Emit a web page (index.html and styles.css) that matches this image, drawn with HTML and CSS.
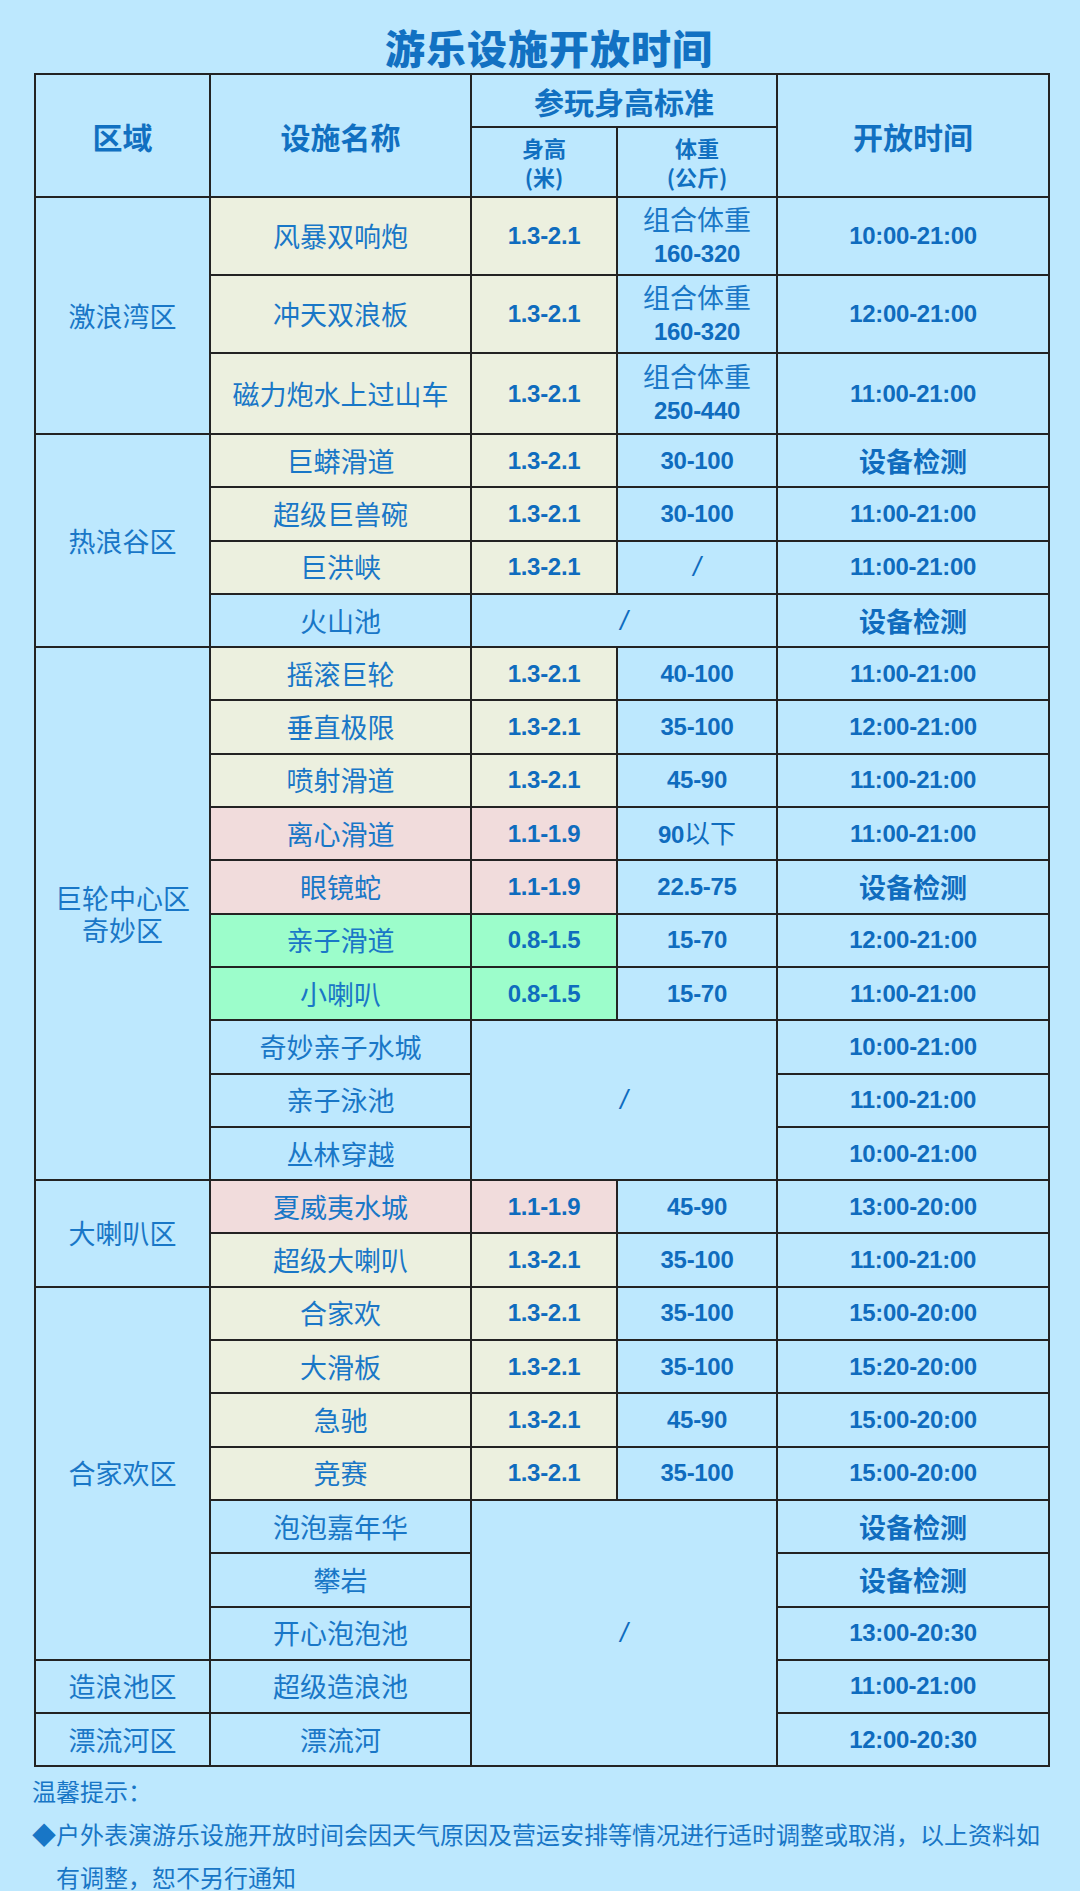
FILE: index.html
```html
<!DOCTYPE html>
<html lang="zh-CN">
<head>
<meta charset="utf-8">
<title>游乐设施开放时间</title>
<link rel="stylesheet" href="styles.css">
</head>
<body>
<div class="page">
  <h1 class="title">游乐设施开放时间</h1>
  <table class="sched">
    <colgroup>
      <col class="c-zone"><col class="c-name"><col class="c-h"><col class="c-w"><col class="c-time">
    </colgroup>
    <thead>
      <tr class="hr1">
        <th rowspan="2" class="th-big">区域</th>
        <th rowspan="2" class="th-big">设施名称</th>
        <th colspan="2" class="th-big">参玩身高标准</th>
        <th rowspan="2" class="th-big">开放时间</th>
      </tr>
      <tr class="hr2">
        <th class="th-sm">身高<br>(米)</th>
        <th class="th-sm">体重<br>(公斤)</th>
      </tr>
    </thead>
    <tbody>
      <tr class="r78">
        <td rowspan="3" class="zone">激浪湾区</td>
        <td class="name beige">风暴双响炮</td>
        <td class="num beige">1.3-2.1</td>
        <td class="combo">组合体重<br><span class="num">160-320</span></td>
        <td class="num">10:00-21:00</td>
      </tr>
      <tr class="r78">
        <td class="name beige">冲天双浪板</td>
        <td class="num beige">1.3-2.1</td>
        <td class="combo">组合体重<br><span class="num">160-320</span></td>
        <td class="num">12:00-21:00</td>
      </tr>
      <tr class="r81">
        <td class="name beige">磁力炮水上过山车</td>
        <td class="num beige">1.3-2.1</td>
        <td class="combo">组合体重<br><span class="num">250-440</span></td>
        <td class="num">11:00-21:00</td>
      </tr>

      <tr class="r">
        <td rowspan="4" class="zone">热浪谷区</td>
        <td class="name beige">巨蟒滑道</td>
        <td class="num beige">1.3-2.1</td>
        <td class="num">30-100</td>
        <td class="bold">设备检测</td>
      </tr>
      <tr class="r">
        <td class="name beige">超级巨兽碗</td>
        <td class="num beige">1.3-2.1</td>
        <td class="num">30-100</td>
        <td class="num">11:00-21:00</td>
      </tr>
      <tr class="r">
        <td class="name beige">巨洪峡</td>
        <td class="num beige">1.3-2.1</td>
        <td class="slash">/</td>
        <td class="num">11:00-21:00</td>
      </tr>
      <tr class="r">
        <td class="name">火山池</td>
        <td colspan="2" class="slash">/</td>
        <td class="bold">设备检测</td>
      </tr>

      <tr class="r">
        <td rowspan="10" class="zone zone2"><div>巨轮中心区</div><div>奇妙区</div></td>
        <td class="name beige">摇滚巨轮</td>
        <td class="num beige">1.3-2.1</td>
        <td class="num">40-100</td>
        <td class="num">11:00-21:00</td>
      </tr>
      <tr class="r">
        <td class="name beige">垂直极限</td>
        <td class="num beige">1.3-2.1</td>
        <td class="num">35-100</td>
        <td class="num">12:00-21:00</td>
      </tr>
      <tr class="r">
        <td class="name beige">喷射滑道</td>
        <td class="num beige">1.3-2.1</td>
        <td class="num">45-90</td>
        <td class="num">11:00-21:00</td>
      </tr>
      <tr class="r">
        <td class="name pink">离心滑道</td>
        <td class="num pink">1.1-1.9</td>
        <td class="num">90<span class="cjk">以下</span></td>
        <td class="num">11:00-21:00</td>
      </tr>
      <tr class="r">
        <td class="name pink">眼镜蛇</td>
        <td class="num pink">1.1-1.9</td>
        <td class="num">22.5-75</td>
        <td class="bold">设备检测</td>
      </tr>
      <tr class="r">
        <td class="name green">亲子滑道</td>
        <td class="num green">0.8-1.5</td>
        <td class="num">15-70</td>
        <td class="num">12:00-21:00</td>
      </tr>
      <tr class="r">
        <td class="name green">小喇叭</td>
        <td class="num green">0.8-1.5</td>
        <td class="num">15-70</td>
        <td class="num">11:00-21:00</td>
      </tr>
      <tr class="r">
        <td class="name">奇妙亲子水城</td>
        <td rowspan="3" colspan="2" class="slash">/</td>
        <td class="num">10:00-21:00</td>
      </tr>
      <tr class="r">
        <td class="name">亲子泳池</td>
        <td class="num">11:00-21:00</td>
      </tr>
      <tr class="r">
        <td class="name">丛林穿越</td>
        <td class="num">10:00-21:00</td>
      </tr>

      <tr class="r">
        <td rowspan="2" class="zone">大喇叭区</td>
        <td class="name pink">夏威夷水城</td>
        <td class="num pink">1.1-1.9</td>
        <td class="num">45-90</td>
        <td class="num">13:00-20:00</td>
      </tr>
      <tr class="r">
        <td class="name beige">超级大喇叭</td>
        <td class="num beige">1.3-2.1</td>
        <td class="num">35-100</td>
        <td class="num">11:00-21:00</td>
      </tr>

      <tr class="r">
        <td rowspan="7" class="zone">合家欢区</td>
        <td class="name beige">合家欢</td>
        <td class="num beige">1.3-2.1</td>
        <td class="num">35-100</td>
        <td class="num">15:00-20:00</td>
      </tr>
      <tr class="r">
        <td class="name beige">大滑板</td>
        <td class="num beige">1.3-2.1</td>
        <td class="num">35-100</td>
        <td class="num">15:20-20:00</td>
      </tr>
      <tr class="r">
        <td class="name beige">急驰</td>
        <td class="num beige">1.3-2.1</td>
        <td class="num">45-90</td>
        <td class="num">15:00-20:00</td>
      </tr>
      <tr class="r">
        <td class="name beige">竞赛</td>
        <td class="num beige">1.3-2.1</td>
        <td class="num">35-100</td>
        <td class="num">15:00-20:00</td>
      </tr>
      <tr class="r">
        <td class="name">泡泡嘉年华</td>
        <td rowspan="5" colspan="2" class="slash">/</td>
        <td class="bold">设备检测</td>
      </tr>
      <tr class="r">
        <td class="name">攀岩</td>
        <td class="bold">设备检测</td>
      </tr>
      <tr class="r">
        <td class="name">开心泡泡池</td>
        <td class="num">13:00-20:30</td>
      </tr>
      <tr class="r">
        <td class="zone">造浪池区</td>
        <td class="name">超级造浪池</td>
        <td class="num">11:00-21:00</td>
      </tr>
      <tr class="r">
        <td class="zone">漂流河区</td>
        <td class="name">漂流河</td>
        <td class="num">12:00-20:30</td>
      </tr>
    </tbody>
  </table>
  <div class="notes">
    <p class="note-title">温馨提示：</p>
    <p class="note-item">◆户外表演游乐设施开放时间会因天气原因及营运安排等情况进行适时调整或取消，以上资料如有调整，恕不另行通知</p>
  </div>
</div>
</body>
</html>
```

FILE: styles.css
```css
html, body {
  margin: 0;
  padding: 0;
  background: #bde8fe;
}

.page {
  width: 1080px;
  min-height: 1891px;
  background: #bde8fe;
  font-family: "Noto Sans CJK SC", sans-serif;
  color: #1876c6;
}

.title {
  margin: 0;
  padding: 21px 0 0 18px;
  height: 52px;
  line-height: 52px;
  text-align: center;
  font-size: 40px;
  font-weight: 900;
  letter-spacing: 1px;
  color: #1271c2;
}

.sched {
  margin-left: 34px;
  width: 1014px;
  border-collapse: collapse;
  table-layout: fixed;
  border: 2px solid #232323;
}

.c-zone { width: 175px; }
.c-name { width: 261px; }
.c-h { width: 146px; }
.c-w { width: 160px; }
.c-time { width: 272px; }

.sched th,
.sched td {
  border: 2px solid #232323;
  padding: 0;
  text-align: center;
  vertical-align: middle;
  background: #bde8fe;
}

.sched th {
  color: #1170c1;
  font-weight: 700;
}

.hr1 { height: 53px; }
.hr2 { height: 70px; }

.th-big {
  font-size: 30px;
  line-height: 36px;
}

.th-sm {
  font-size: 22px;
  line-height: 29px;
}

.r78 { height: 78px; }
.r81 { height: 81px; }
.r { height: 53.3px; }

.sched td {
  font-size: 27px;
  line-height: 32px;
  color: #1977c7;
}

.sched .beige { background: #ecf0df; }
.sched .pink { background: #f1dcdc; }
.sched .green { background: #9cfdcb; }

.zone2 div {
  height: 32px;
  line-height: 32px;
}

.num {
  font-family: "Liberation Sans", Arial, sans-serif;
  font-weight: 700;
  letter-spacing: -0.3px;
}

.sched td.num,
.combo .num {
  font-size: 24px;
  color: #0f6cbe;
}

.sched td.slash {
  font-family: "Liberation Sans", Arial, sans-serif;
  font-weight: 400;
  font-style: italic;
  font-size: 27px;
  color: #0f6cbe;
}

.cjk {
  font-family: "Noto Sans CJK SC", sans-serif;
  font-weight: 400;
  font-size: 26px;
  letter-spacing: 0;
}

.sched td.bold {
  font-weight: 700;
  font-size: 27px;
  color: #0f6cbe;
}

.combo {
  line-height: 32px;
}

.notes {
  padding: 2px 0 0 32px;
  width: 1010px;
  font-size: 24px;
  line-height: 43px;
  color: #1876c6;
}

.notes p {
  margin: 0;
}

.note-item {
  padding-left: 24px;
  text-indent: -24px;
}
```
